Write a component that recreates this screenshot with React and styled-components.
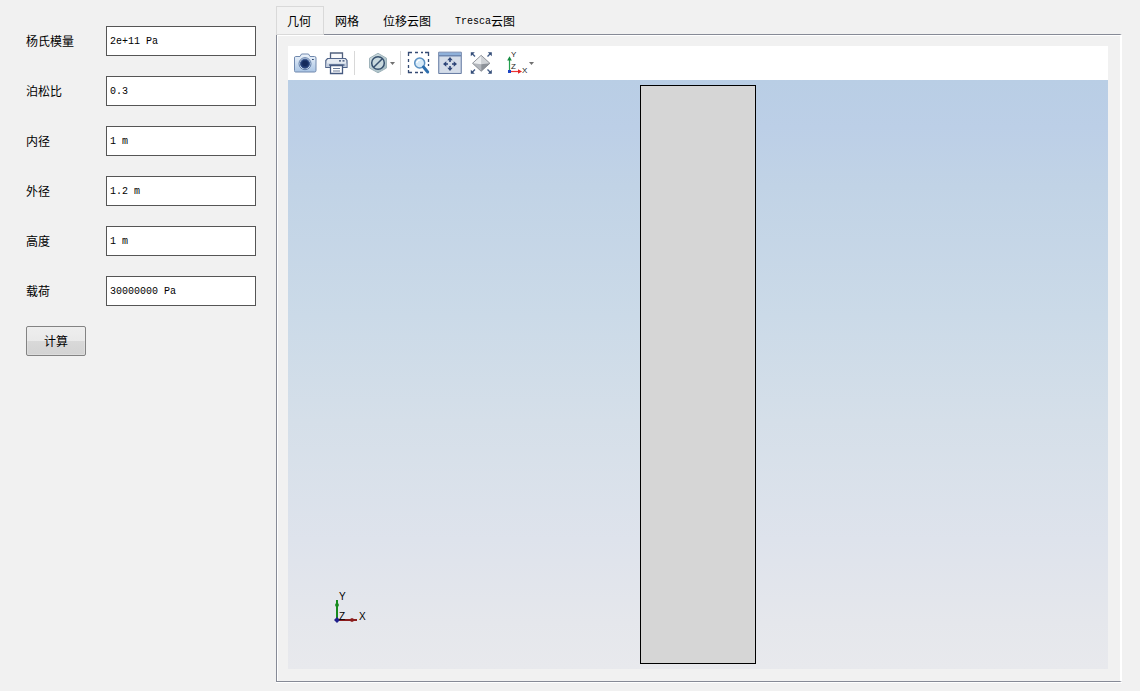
import React, { useState } from "react";
import styled, { createGlobalStyle } from "styled-components";

const GlobalStyle = createGlobalStyle`
  * { box-sizing: border-box; }
  body {
    margin: 0;
    background: #f1f1f1;
    color: #000;
    font-family: "Liberation Sans", "Noto Sans CJK SC", sans-serif;
    font-size: 12px;
    line-height: 16px;
  }
`;

const Page = styled.div`
  display: flex;
  min-height: 100vh;
`;

const Form = styled.form`
  display: flex;
  flex: 0 0 276px;
  flex-direction: column;
  align-items: stretch;
  gap: 20px;
  padding: 26px 20px 20px 26px;
`;

const Field = styled.div`
  display: flex;
  align-items: center;
  height: 30px;
`;

const Label = styled.label`
  flex: 0 0 80px;
  font-family: "Noto Sans CJK SC", sans-serif;
`;

const TextBox = styled.input`
  flex: 1;
  min-width: 0;
  height: 30px;
  padding: 0 3px;
  border: 1px solid #555;
  border-radius: 0;
  background: #fff;
  color: #000;
  font-family: "Liberation Mono", monospace;
  font-size: 10px;
  outline: none;
`;

const Submit = styled.button`
  align-self: flex-start;
  width: 60px;
  height: 30px;
  padding: 0 0 2px;
  border: 1px solid #838383;
  border-radius: 2px;
  background: linear-gradient(#eeeeee 0%, #e9e9e9 50%, #d9d9d9 51%, #d3d3d3 100%);
  box-shadow: inset 0 0 0 1px #f0f0f055;
  color: #000;
  font-family: "Noto Sans CJK SC", sans-serif;
  font-size: 12px;
`;

const Main = styled.main`
  display: flex;
  flex: 1;
  flex-direction: column;
  min-width: 0;
  padding: 6px 18px 8px 0;
`;

const TabList = styled.div`
  display: flex;
`;

const Tab = styled.button`
  display: flex;
  align-items: center;
  z-index: 1;
  height: 29px;
  margin-bottom: -1px;
  padding: 0 12px 0 10px;
  border: 1px solid ${(p) => (p.$active ? "#d9d9d9" : "transparent")};
  background: ${(p) => (p.$active ? "#f2f2f2" : "transparent")};
  color: #000;
  font-family: "Noto Sans CJK SC", sans-serif;
  font-size: 12px;
  line-height: 16px;
  white-space: nowrap;
`;

const Latin = styled.span`
  padding-top: 2px;
  font-family: "Liberation Mono", monospace;
  font-size: 10px;
`;

const Panel = styled.section`
  display: flex;
  flex: 1;
  flex-direction: column;
  padding: 11px 12px 12px 11px;
  border: 1px solid #868a96;
  border-right: 2px solid #fff;
  box-shadow: inset 1px 1px 0 #fff, 0 1px 0 #fff;
  margin-bottom: 1px;
`;

const Toolbar = styled.div`
  display: flex;
  align-items: center;
  height: 34px;
  padding-left: 1px;
  background: #fff;
`;

const Tool = styled.button`
  display: flex;
  align-items: center;
  justify-content: center;
  flex: none;
  width: 32px;
  height: 34px;
  padding: 0;
  border: 0;
  background: transparent;
`;

const MenuTool = styled(Tool)`
  justify-content: flex-start;
  gap: 1px;
  width: 43px;
  padding-left: 9px;
`;

const Separator = styled.span`
  flex: none;
  width: 1px;
  height: 24px;
  margin: 0 1px;
  background: #d8d8d8;
`;

const Viewport = styled.div`
  position: relative;
  display: flex;
  flex: 1;
  justify-content: center;
  min-height: 400px;
  padding: 5px;
  background: linear-gradient(#b9cee5 0%, #bccfe7 8%, #c1d3e6 18%, #cbdae8 40%, #d5dfe9 58%, #dee3ec 78%, #e5e7ec 92%, #e8e9ed 100%);
`;

const Solid = styled.div`
  width: 116px;
  border: 1px solid #000;
  background: #d6d6d6;
`;

const Triad = styled.svg`
  position: absolute;
  bottom: 44px;
  left: 40px;
`;

const AxisLabel = styled.text`
  font-family: "Liberation Sans", sans-serif;
  font-size: ${(p) => p.$size}px;
  fill: ${(p) => p.$color};
`;

const Icon = ({ width = 24, children }) => (
  <svg width={width} height="24" viewBox={`0 0 ${width} 24`} fill="none" aria-hidden="true">
    {children}
  </svg>
);

const Caret = () => (
  <svg width="5" height="3" viewBox="0 0 5 3" aria-hidden="true">
    <path d="M0 0h5L2.5 3z" fill="#707070" />
  </svg>
);

const CameraIcon = () => (
  <Icon>
    <defs>
      <linearGradient id="cam" x1="0" y1="0" x2="0" y2="1">
        <stop offset="0" stopColor="#eef4fb" />
        <stop offset="1" stopColor="#a9c4e4" />
      </linearGradient>
    </defs>
    <path d="M2.500 5.500H7L8.500 3h7L17 5.500h4.500q1.500 0 1.500 1.500v12.500q0 1.500-1.500 1.500h-19Q1.500 21 1.500 19.500V7q0-1.500 1-1.500z" fill="url(#cam)" stroke="#7088ad" />
    <circle cx="12" cy="12.700" r="6" fill="#d8e6f5" stroke="#5f7ba6" />
    <circle cx="12" cy="12.700" r="4.500" fill="#203a70" stroke="#35528a" />
    <circle cx="12" cy="12.500" r="2.800" fill="#142a5b" />
    <path d="M19 8.500h1.800" stroke="#30496f" strokeWidth="1.200" />
  </Icon>
);

const PrinterIcon = () => (
  <Icon>
    <path d="M5.500 8V2h12v6" fill="#f9fafc" stroke="#51617e" strokeWidth="1.300" />
    <path d="M2.500 7.500h18l1.500 2v7H.8v-7z" fill="#e6ebf2" stroke="#52658a" strokeWidth="1.200" />
    <path d="M1.400 12.500h20v3.500h-20z" fill="#c3cedf" />
    <path d="M14 9.800h2M17.500 9.800h2" stroke="#30466f" strokeWidth="1.300" />
    <path d="M4 14h15.500" stroke="#465a80" strokeWidth="1.300" />
    <path d="M5.500 14.500h12v8h-12z" fill="#fff" stroke="#465a80" strokeWidth="1.300" />
    <path d="M8 17.500h7M8 20h7" stroke="#6c7d99" />
  </Icon>
);

const HexIcon = () => (
  <Icon>
    <defs>
      <linearGradient id="hex" x1="0" y1="0" x2="1" y2="1">
        <stop offset="0" stopColor="#d7e3e6" />
        <stop offset="1" stopColor="#9db6be" />
      </linearGradient>
    </defs>
    <path d="M13 2.300l8.500 4.900v9.800L13 21.800 4.500 17V7.200z" fill="url(#hex)" stroke="#9fb3ba" />
    <circle cx="13" cy="12" r="6.300" fill="#c9d9de" stroke="#36506f" strokeWidth="1.500" />
    <path d="M8.700 16.300l8.600-8.600" stroke="#36506f" strokeWidth="1.500" />
  </Icon>
);

const ZoomAreaIcon = () => (
  <Icon>
    <path d="M2.500 5V1.500H6M9 1.500h3M15 1.500h2M19 1.500h3.500V5M22.500 8v3M22.500 13v2M2.500 8v3M2.500 14v3M2.500 19v2.500H6M9 21.500h3M14 21.500h3" stroke="#344a73" strokeWidth="1.300" />
    <circle cx="13.700" cy="12" r="5" fill="#d7eaf8" stroke="#5b91c3" strokeWidth="1.500" />
    <path d="M10.700 12q.5-3 3.500-3" stroke="#fff" strokeWidth="1.200" />
    <path d="M17.500 16l4.200 5" stroke="#2e6fae" strokeWidth="3" strokeLinecap="round" />
  </Icon>
);

const FitIcon = () => (
  <Icon>
    <path d="M.7 1.200h22.600v21.300H.7z" fill="#c7d3e4" stroke="#6b7fa5" />
    <path d="M1.200 1.700h21.600v2.600H1.200z" fill="#8fb1da" />
    <path d="M1 4.800h22" stroke="#506b9c" />
    <path d="M2 6h20v15.500H2z" fill="#d5dde9" />
    <path d="M12 6l2.700 3.300H9.300zM12 20l2.700-3.300H9.300zM5 13l3.300-2.700v5.400zM19 13l-3.300-2.700v5.400z" fill="#2f4678" />
    <path d="M12 8v3M12 15v3M7 13h3M14 13h3" stroke="#2f4678" strokeWidth="1.600" />
  </Icon>
);

const DiamondIcon = () => (
  <Icon>
    <path d="M2 2.500l3 3M20.500 2.500l-3 3M2 21.500l3-3M20.500 21.500l-3-3" stroke="#405a86" strokeWidth="1.400" />
    <path d="M.8 1.300h4L.8 5.300zM21.800 1.300h-4l4 4zM.8 22.700h4l-4-4zM21.800 22.700h-4l4-4z" fill="#344d78" />
    <path d="M11.200 4.300l8.700 8-8.700 8-8.700-8z" fill="#d7d9dd" />
    <path d="M11.200 4.300v9l-8.700-1z" fill="#eceef0" />
    <path d="M11.200 4.300v9l8.700-1z" fill="#cfd2d6" />
    <path d="M2.500 12.300l8.700 1v7z" fill="#b3b7bd" />
    <path d="M19.900 12.300l-8.700 1v7z" fill="#8d9299" />
    <path d="M11.200 4.300l8.700 8-8.700 8-8.700-8z" stroke="#7d8289" strokeWidth=".8" />
  </Icon>
);

const AxesIcon = () => (
  <Icon width={21}>
    <path d="M2.500 20V7" stroke="#23a04f" strokeWidth="1.200" />
    <path d="M2.500 5.300L4.800 9.500H.2z" fill="#168b40" />
    <path d="M3 20.500h10" stroke="#ef3434" strokeWidth="1.200" />
    <path d="M15 20.500l-4-2.200v4.400z" fill="#e32323" />
    <rect x="1" y="19" width="3" height="3" fill="#1c45c4" />
    <AxisLabel $size={8} $color="#222" x="4" y="6">Y</AxisLabel>
    <AxisLabel $size={8} $color="#222" x="4" y="18">Z</AxisLabel>
    <AxisLabel $size={8} $color="#222" x="15" y="22">X</AxisLabel>
  </Icon>
);

const fields = [
  { id: "young", label: "杨氏模量", value: "2e+11 Pa" },
  { id: "poisson", label: "泊松比", value: "0.3" },
  { id: "inner", label: "内径", value: "1 m" },
  { id: "outer", label: "外径", value: "1.2 m" },
  { id: "height", label: "高度", value: "1 m" },
  { id: "load", label: "载荷", value: "30000000 Pa" },
];

const tabs = [
  { id: "geometry", text: "几何" },
  { id: "mesh", text: "网格" },
  { id: "displacement", text: "位移云图" },
  { id: "tresca", latin: "Tresca", text: "云图" },
];

export default function App() {
  const [active, setActive] = useState("geometry");
  return (
    <>
      <GlobalStyle />
      <Page>
        <Form onSubmit={(e) => e.preventDefault()}>
          {fields.map((f) => (
            <Field key={f.id}>
              <Label htmlFor={f.id}>{f.label}</Label>
              <TextBox id={f.id} type="text" defaultValue={f.value} />
            </Field>
          ))}
          <Submit type="submit">计算</Submit>
        </Form>
        <Main>
          <TabList role="tablist">
            {tabs.map((t) => (
              <Tab
                key={t.id}
                type="button"
                role="tab"
                aria-selected={t.id === active}
                $active={t.id === active}
                onClick={() => setActive(t.id)}
              >
                {t.latin && <Latin>{t.latin}</Latin>}
                {t.text}
              </Tab>
            ))}
          </TabList>
          <Panel role="tabpanel">
            <Toolbar role="toolbar">
              <Tool type="button" aria-label="截图"><CameraIcon /></Tool>
              <Tool type="button" aria-label="打印"><PrinterIcon /></Tool>
              <Separator />
              <MenuTool type="button" aria-label="显示"><HexIcon /><Caret /></MenuTool>
              <Separator />
              <Tool type="button" aria-label="框选缩放"><ZoomAreaIcon /></Tool>
              <Tool type="button" aria-label="适应窗口"><FitIcon /></Tool>
              <Tool type="button" aria-label="适应选择"><DiamondIcon /></Tool>
              <MenuTool type="button" aria-label="视图方向"><AxesIcon /><Caret /></MenuTool>
            </Toolbar>
            <Viewport>
              <Solid />
              <Triad width="44" height="36" viewBox="0 0 44 36" aria-hidden="true">
                <path d="M9 31V11" stroke="#168a1c" strokeWidth="2" />
                <path d="M8 14h2l1 2-1 2H8l-1-2z" fill="#168a1c" />
                <path d="M9 31h20" stroke="#8b1c1c" strokeWidth="2" />
                <path d="M22 30l2-1 2 1v2l-2 1-2-1z" fill="#8b1c1c" />
                <path d="M9 28l3 3-3 3-3-3z" fill="#20208c" />
                <AxisLabel $size={10} $color="#000" x="11" y="11">Y</AxisLabel>
                <AxisLabel $size={10} $color="#000" x="11" y="31">Z</AxisLabel>
                <AxisLabel $size={10} $color="#000" x="31" y="31">X</AxisLabel>
              </Triad>
            </Viewport>
          </Panel>
        </Main>
      </Page>
    </>
  );
}
